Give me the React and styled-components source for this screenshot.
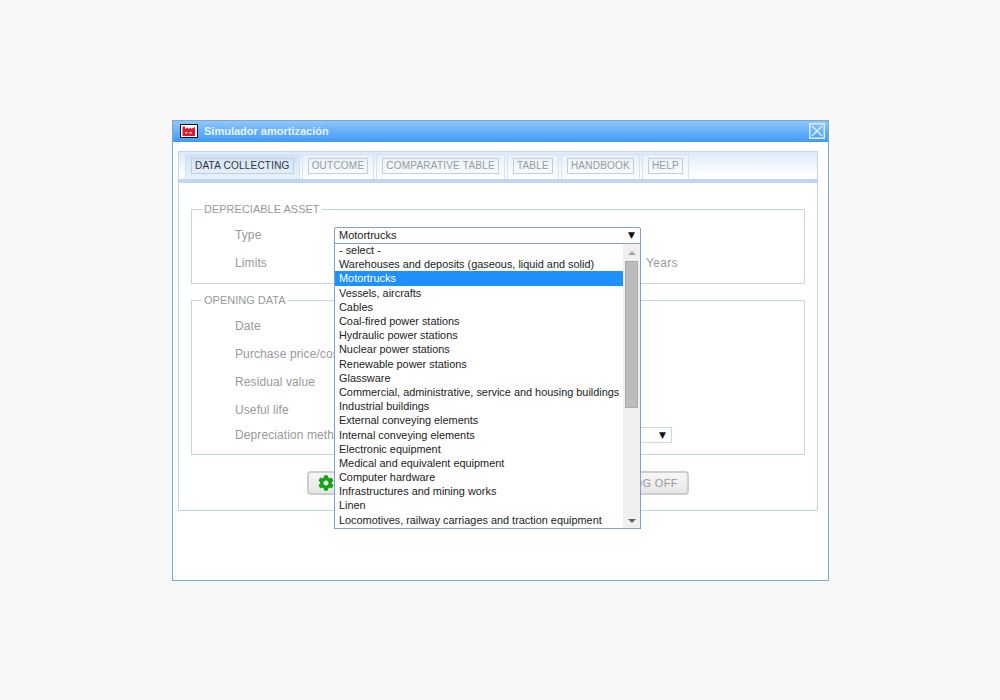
import styled, { createGlobalStyle } from "styled-components";
import { FaCog } from "react-icons/fa";

const GlobalStyle = createGlobalStyle`
  html, body {
    margin: 0;
    padding: 0;
    background-color: #f8f8f9;
  }
  body {
    font-family: "Liberation Sans", Arial, sans-serif;
  }
`;

const Page = styled.div`
  width: 1000px;
  height: 700px;
  box-sizing: border-box;
  padding: 120px 0 0 172px;
`;

const Window = styled.div`
  width: 657px;
  height: 461px;
  box-sizing: border-box;
  background-color: white;
  border: 1px solid #7ba9cb;
`;

const TitleBar = styled.div`
  height: 21px;
  box-sizing: border-box;
  display: flex;
  align-items: center;
  padding: 0 3px 2px 7px;
  background: linear-gradient(#8fc6fd, #3f9af7);
`;

const Title = styled.span`
  flex: 1;
  margin-left: 6px;
  color: #e8f4ff;
  font-size: 11px;
  font-weight: bold;
`;

const Close = styled.button`
  width: 16px;
  height: 16px;
  padding: 0;
  display: flex;
  background: transparent;
  border: 0;
`;

const Panel = styled.div`
  margin: 9px 10px 0 5px;
  height: 360px;
  box-sizing: border-box;
  border: 1px solid #c3d6e2;
`;

const TabBar = styled.div`
  height: 31px;
  box-sizing: border-box;
  display: flex;
  gap: 2px;
  padding: 2px 0 0 6px;
  background: linear-gradient(#dcebfb, #ffffff 85%);
  border-bottom: 4px solid #bcd6f5;
`;

const Tab = styled.div`
  height: 25px;
  box-sizing: border-box;
  padding: 3px 5px 0;
  background: ${(p) => (p.$active ? "linear-gradient(#cfe2f8, #eaf2fc)" : "linear-gradient(#e6f0fb, #ffffff)")};
  border: 1px solid #d3e3f3;
  border-bottom: 0;
`;

const TabLabel = styled.span`
  display: block;
  height: 16px;
  box-sizing: border-box;
  padding: 0 3px;
  border: 1px solid #c6ced5;
  color: ${(p) => (p.$active ? "#333" : "#999")};
  font-size: 10px;
  line-height: 14px;
  letter-spacing: 0.22px;
  white-space: nowrap;
`;

const Body = styled.div`
  padding: 19px 12px 0;
`;

const Fieldset = styled.fieldset`
  margin: 0 0 9px;
  padding: 0;
  min-width: 0;
  border: 1px solid #c3d6e2;
  height: ${(p) => p.$height}px;
  box-sizing: border-box;
`;

const Legend = styled.legend`
  margin-left: 10px;
  padding: 0 2px;
  color: #999;
  font-size: 11px;
  line-height: 14px;
`;

const Rows = styled.div`
  padding: 5px 0 0 43px;
`;

const Row = styled.div`
  height: ${(p) => p.$height || 28}px;
  display: flex;
  align-items: center;
  position: relative;
`;

const Label = styled.span`
  width: 99px;
  flex: none;
  color: #999;
  font-size: 12px;
  letter-spacing: 0.1px;
  white-space: nowrap;
`;

const Control = styled.div`
  width: ${(p) => p.$width}px;
  height: ${(p) => (p.$open ? 17 : 16)}px;
  flex: none;
  box-sizing: border-box;
  display: flex;
  align-items: center;
  justify-content: space-between;
  padding: 0 4px;
  background-color: white;
  border: ${(p) => (p.$open ? "1px solid #7e9fc9" : "1px solid #c9dbe6")};
  border-radius: ${(p) => (p.$open ? "2px" : "0")};
  color: #222;
  font-size: 11px;
  position: relative;
`;

const Arrow = styled.span`
  color: #111;
  font-family: "DejaVu Sans", sans-serif;
  font-size: 9px;
  line-height: 1;
  margin-right: 1px;
`;

const Unit = styled.span`
  margin-left: 5px;
  color: #999;
  font-size: 12px;
  letter-spacing: 0.3px;
`;

const Dropdown = styled.div`
  position: absolute;
  z-index: 2;
  left: -1px;
  top: 15px;
  width: 307px;
  height: 286px;
  box-sizing: border-box;
  display: flex;
  background-color: white;
  border: 1px solid #7e9fc9;
`;

const List = styled.ul`
  flex: 1;
  min-width: 0;
  margin: -0.45px 0 0;
  padding: 0;
  list-style: none;
  overflow: hidden;
`;

const Option = styled.li`
  height: 14.2px;
  padding-left: 4px;
  background-color: ${(p) => (p.$selected ? "#1e90ff" : "transparent")};
  color: ${(p) => (p.$selected ? "white" : "#222")};
  font-size: 10.9px;
  line-height: 14.2px;
  white-space: nowrap;
`;

const ScrollBar = styled.div`
  width: 17px;
  flex: none;
  box-sizing: border-box;
  display: flex;
  flex-direction: column;
  align-items: center;
  padding-top: 7px;
  background-color: #f0f0f0;
`;

const ScrollUp = styled.span`
  width: 0;
  height: 0;
  border: 4px solid transparent;
  border-top: 0;
  border-bottom: 4px solid #a3a3a3;
`;

const ScrollDown = styled.span`
  width: 0;
  height: 0;
  margin-top: auto;
  margin-bottom: 5px;
  border: 4px solid transparent;
  border-bottom: 0;
  border-top: 4px solid #606060;
`;

const Thumb = styled.div`
  width: 13px;
  height: 147px;
  margin-top: 6px;
  box-sizing: border-box;
  background-color: #bcbcbc;
  border: 1px solid #ababab;
`;

const Buttons = styled.div`
  display: flex;
  justify-content: center;
  gap: 10px;
  margin-top: 16px;
`;

const Button = styled.button`
  width: ${(p) => p.$width}px;
  height: 24px;
  box-sizing: border-box;
  display: flex;
  align-items: center;
  justify-content: ${(p) => p.$align || "center"};
  gap: 5px;
  padding: 0 9px;
  background: linear-gradient(#f7f7f7, #e6e6e6);
  border: 2px solid #cdcdcd;
  border-radius: 4px;
  color: #999;
  font-family: inherit;
  font-size: 11px;
  letter-spacing: 0.4px;
`;

const options = [
  "- select -",
  "Warehouses and deposits (gaseous, liquid and solid)",
  "Motortrucks",
  "Vessels, aircrafts",
  "Cables",
  "Coal-fired power stations",
  "Hydraulic power stations",
  "Nuclear power stations",
  "Renewable power stations",
  "Glassware",
  "Commercial, administrative, service and housing buildings",
  "Industrial buildings",
  "External conveying elements",
  "Internal conveying elements",
  "Electronic equipment",
  "Medical and equivalent equipment",
  "Computer hardware",
  "Infrastructures and mining works",
  "Linen",
  "Locomotives, railway carriages and traction equipment",
];

const tabs = ["DATA COLLECTING", "OUTCOME", "COMPARATIVE TABLE", "TABLE", "HANDBOOK", "HELP"];

const FactoryIcon = () => (
  <svg width="18" height="14" viewBox="0 0 18 14">
    <rect x="0.5" y="0.5" width="17" height="13" fill="#fff" stroke="#111" />
    <path d="M2.500 12V2.500h2.500V5l3-1.500V5l3-1.500V5l4-2v9z" fill="#dc1c2c" />
    <path d="M5 8h2.500v1.500H5zM9.500 8H12v1.500H9.500z" fill="#f9c9cc" />
  </svg>
);

const CloseIcon = () => (
  <svg width="16" height="16" viewBox="0 0 16 16">
    <rect x="0.750" y="0.750" width="14.500" height="14.500" fill="none" stroke="#d9efff" strokeWidth="1.500" />
    <path d="M3 3l10 10M13 3L3 13" stroke="#d9efff" strokeWidth="1.500" />
  </svg>
);

const App = () => {
  return (
    <Page>
      <GlobalStyle />
      <Window>
        <TitleBar>
          <FactoryIcon />
          <Title>Simulador amortización</Title>
          <Close>
            <CloseIcon />
          </Close>
        </TitleBar>
        <Panel>
          <TabBar>
            {tabs.map((tab, i) => (
              <Tab key={tab} $active={i === 0}>
                <TabLabel $active={i === 0}>{tab}</TabLabel>
              </Tab>
            ))}
          </TabBar>
          <Body>
            <Fieldset $height={82}>
              <Legend>DEPRECIABLE ASSET</Legend>
              <Rows>
                <Row>
                  <Label>Type</Label>
                  <Control $width={307} $open>
                    Motortrucks
                    <Arrow>▼</Arrow>
                    <Dropdown>
                      <List>
                        {options.map((option) => (
                          <Option key={option} $selected={option === "Motortrucks"}>
                            {option}
                          </Option>
                        ))}
                      </List>
                      <ScrollBar>
                        <ScrollUp />
                        <Thumb />
                        <ScrollDown />
                      </ScrollBar>
                    </Dropdown>
                  </Control>
                </Row>
                <Row>
                  <Label>Limits</Label>
                  <Control $width={307} />
                  <Unit>Years</Unit>
                </Row>
              </Rows>
            </Fieldset>
            <Fieldset $height={162}>
              <Legend>OPENING DATA</Legend>
              <Rows>
                <Row>
                  <Label>Date</Label>
                </Row>
                <Row>
                  <Label>Purchase price/cost</Label>
                </Row>
                <Row>
                  <Label>Residual value</Label>
                </Row>
                <Row>
                  <Label>Useful life</Label>
                </Row>
                <Row $height={22}>
                  <Label>Depreciation method</Label>
                  <Control $width={338}>
                    <span />
                    <Arrow>▼</Arrow>
                  </Control>
                </Row>
              </Rows>
            </Fieldset>
            <Buttons>
              <Button $width={120} $align="flex-start">
                <FaCog size={16} color="#17a317" />
              </Button>
              <Button $width={120} />
              <Button $width={122} $align="flex-end">LOG OFF</Button>
            </Buttons>
          </Body>
        </Panel>
      </Window>
    </Page>
  );
};

export default App;
